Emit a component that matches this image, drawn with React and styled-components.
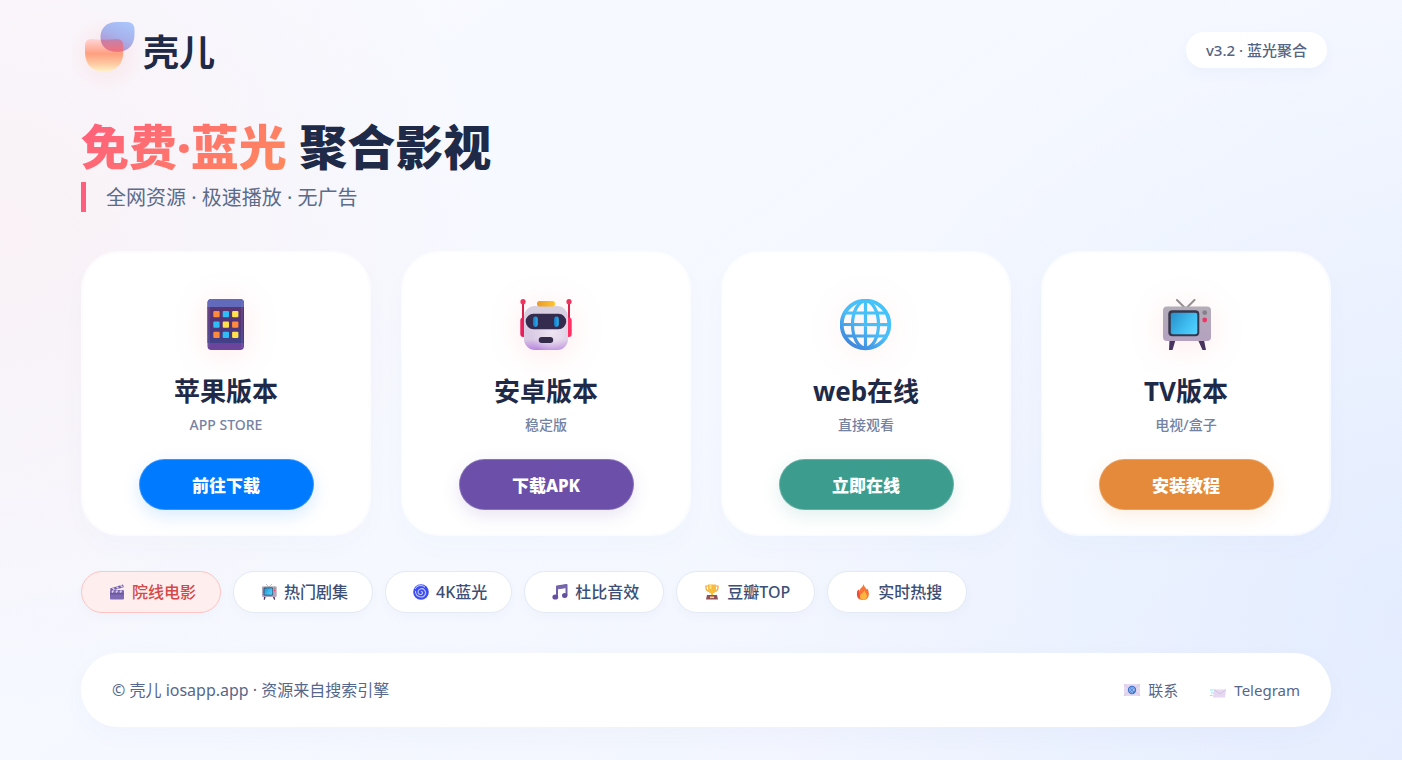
import React from 'react';
import styled, {createGlobalStyle} from 'styled-components';

const GlobalStyle = createGlobalStyle`
  * {
    box-sizing: border-box;
  }

  html {
    min-height: 100%;
  }

  body {
    margin: 0;
    min-height: 100vh;
    font-family: "Noto Sans", "Noto Sans CJK SC", sans-serif;
    color: #1e2a47;
    background:
      radial-gradient(circle at 0% 30%, rgba(255, 215, 215, 0.24), transparent 32%),
      radial-gradient(circle at 100% 80%, rgba(212, 228, 255, 0.44), transparent 42%),
      linear-gradient(145deg, #f8faff 0%, #f5f8ff 50%, #eff3fe 100%);
  }
`;

const Page = styled.div`
  padding: 20px 71px 33px 81px;
`;

const Header = styled.header`
  display: flex;
  align-items: center;
  justify-content: space-between;
  height: 60px;
  padding: 0 4px;
`;

const Brand = styled.div`
  display: flex;
  align-items: center;
  gap: 8px;
`;

const BrandName = styled.span`
  padding-top: 6px;
  font-size: 36px;
  line-height: 52px;
  font-weight: 700;
`;

const Version = styled.span`
  padding: 8px 20px;
  border-radius: 40px;
  background: #fff;
  color: #546583;
  font-size: 15px;
  line-height: 20px;
  font-weight: 500;
  box-shadow: 0 6px 14px rgba(60, 90, 150, 0.04);
`;

const Title = styled.h1`
  margin: 33px 0 1px;
  font-size: 48px;
  line-height: 68px;
  font-weight: 900;
`;

const Accent = styled.span`
  background: linear-gradient(135deg, #ff5e7d, #ff8a5c);
  background-clip: text;
  -webkit-background-clip: text;
  color: transparent;
`;

const Lead = styled.p`
  margin: 0;
  padding: 2px 0 0 20px;
  border-left: 5px solid #ff5e7d;
  color: #5b6b8a;
  font-size: 20px;
  line-height: 28px;
`;

const Grid = styled.main`
  display: grid;
  grid-template-columns: repeat(4, 1fr);
  gap: 30px;
  margin-top: 39px;
`;

const Card = styled.section`
  display: flex;
  flex-direction: column;
  align-items: center;
  padding: 46px 20px 24px;
  border: 2px solid rgba(255, 255, 255, 0.7);
  border-radius: 38px;
  background: #fff;
  background-clip: padding-box;
  box-shadow: 0 12px 28px rgba(60, 90, 150, 0.02);

  > svg {
    filter: drop-shadow(0 4px 16px rgba(255, 94, 98, 0.14));
  }
`;

const CardTitle = styled.h2`
  margin: 20px 0 0;
  font-size: 26px;
  line-height: 40px;
  font-weight: 700;
`;

const CardNote = styled.p`
  margin: 4px 0 24px;
  color: #7482a3;
  font-size: 14px;
  line-height: 20px;
  font-weight: 500;
`;

const CardLink = styled.a`
  width: 175px;
  padding: 13px 0 11px;
  border: 1px solid rgba(255, 255, 255, 0.2);
  border-radius: 40px;
  background-color: ${props => props.$color};
  box-shadow: 0 6px 18px ${props => props.$color}26;
  color: #fff;
  font-size: 17px;
  line-height: 25px;
  font-weight: 800;
  text-align: center;
  text-decoration: none;
`;

const Chips = styled.nav`
  display: flex;
  flex-wrap: wrap;
  gap: 12px;
  margin-top: 35px;
`;

const Chip = styled.button`
  display: flex;
  align-items: center;
  gap: 7px;
  height: 42px;
  padding: 0 24px 0 27px;
  border: 1px solid ${props => props.$active ? '#ffc4c4' : '#e4eaf3'};
  border-radius: 40px;
  background: ${props => props.$active ? '#ffeeee' : '#fff'};
  color: ${props => props.$active ? '#d34848' : '#3d4f74'};
  font-family: inherit;
  font-size: 16px;
  line-height: 24px;
  font-weight: 500;
  box-shadow: 0 4px 10px rgba(60, 90, 150, 0.03);
`;

const Footer = styled.footer`
  display: flex;
  align-items: center;
  justify-content: space-between;
  margin-top: 40px;
  padding: 25px 31px;
  border-radius: 40px;
  background: #fff;
  color: #55678a;
  font-size: 16px;
  line-height: 24px;
  box-shadow: 0 8px 24px rgba(60, 90, 150, 0.03);
`;

const FooterLinks = styled.div`
  display: flex;
  gap: 32px;
`;

const FooterLink = styled.a`
  display: flex;
  align-items: center;
  gap: 8px;
  color: inherit;
  font-size: 15px;
  text-decoration: none;
`;

const Logo = () => (
  <svg width="50" height="64" viewBox="0 0 50 64" overflow="visible" aria-hidden="true">
    <defs>
      <linearGradient id="cup" x1="0" y1="0" x2="0" y2="1">
        <stop offset="0" stopColor="#ffd5d8" />
        <stop offset="0.45" stopColor="#ff9f80" />
        <stop offset="0.75" stopColor="#ffc8a0" />
        <stop offset="1" stopColor="#fff3c8" />
      </linearGradient>
      <linearGradient id="leaf" x1="0.8" y1="0" x2="0.3" y2="1">
        <stop offset="0" stopColor="#aac6fb" />
        <stop offset="0.5" stopColor="#a7b1eb" />
        <stop offset="1" stopColor="#b78bc4" />
      </linearGradient>
      <linearGradient id="overlap" x1="0.5" y1="0" x2="0.5" y2="1">
        <stop offset="0" stopColor="#c183af" />
        <stop offset="0.35" stopColor="#ed7280" />
        <stop offset="1" stopColor="#ee7a73" />
      </linearGradient>
      <radialGradient id="logoGlow">
        <stop offset="0" stopColor="#ff8a8a" stopOpacity="0.16" />
        <stop offset="1" stopColor="#ff8a8a" stopOpacity="0" />
      </radialGradient>
      <clipPath id="leafShape">
        <path d="M32 4h10q7.500 0 7.500 8v4c0 11-6 17.700-17 17.700s-17-6-17-15C15.500 10 22 4 32 4z" />
      </clipPath>
    </defs>
    <circle cx="22" cy="36" r="38" fill="url(#logoGlow)" />
    <path d="M7 21q12 1.500 24 0q7.300-.5 7.300 7v6c0 13-8 19.700-19.300 19.700S0 47 0 34v-6q0-7.500 7-7z" fill="url(#cup)" />
    <path d="M32 4h10q7.500 0 7.500 8v4c0 11-6 17.700-17 17.700s-17-6-17-15C15.500 10 22 4 32 4z" fill="url(#leaf)" />
    <path d="M7 21q12 1.500 24 0q7.300-.5 7.300 7v6c0 13-8 19.700-19.300 19.700S0 47 0 34v-6q0-7.500 7-7z" fill="url(#overlap)" clipPath="url(#leafShape)" />
  </svg>
);

const PHONE_KEYS = [
  ['#ff8a3d', '#30bdf5', '#ffe14d'],
  ['#30bdf5', '#ffe14d', '#ff8a3d'],
  ['#ff8a3d', '#30bdf5', '#ffe14d'],
];

const PhoneIcon = () => (
  <svg width="52" height="52" viewBox="0 0 52 52" aria-hidden="true">
    <defs>
      <linearGradient id="phoneBody" x1="0" y1="0" x2="0" y2="1">
        <stop offset="0" stopColor="#5b3470" />
        <stop offset="0.5" stopColor="#503377" />
        <stop offset="1" stopColor="#41428b" />
      </linearGradient>
    </defs>
    <rect x="7.5" y="0" width="36.5" height="51" rx="4" fill="#6c449c" />
    <path d="M11.5 0h28.5a4 4 0 0 1 4 4v5H7.500V4a4 4 0 0 1 4-4z" fill="#626bbb" />
    <path d="M7.500 8h36.500v36H7.500z" fill="url(#phoneBody)" />
    <path d="M42 2v47M9 3v45" stroke="#8371b5" strokeWidth="1.5" opacity="0.35" />
    {PHONE_KEYS.map((row, y) => row.map((color, x) => (
      <rect key={`${x}-${y}`} x={13.3 + x * 9.4} y={12 + y * 10.4} width="6.3" height="6.3" rx="1" fill={color} />
    )))}
  </svg>
);

const RobotIcon = () => (
  <svg width="52" height="52" viewBox="0 0 52 52" aria-hidden="true">
    <defs>
      <linearGradient id="robotHead" x1="0" y1="0" x2="0" y2="1">
        <stop offset="0" stopColor="#d8cfe0" />
        <stop offset="0.75" stopColor="#d9cae4" />
        <stop offset="1" stopColor="#b985df" />
      </linearGradient>
      <radialGradient id="robotShine" cx="0.65" cy="0.6" r="0.5">
        <stop offset="0" stopColor="#eee4f2" />
        <stop offset="1" stopColor="#eee4f2" stopOpacity="0" />
      </radialGradient>
      <linearGradient id="robotHat" x1="0" y1="0" x2="1" y2="0">
        <stop offset="0" stopColor="#e99a2c" />
        <stop offset="1" stopColor="#ffc52e" />
      </linearGradient>
      <linearGradient id="robotEye" x1="0" y1="0" x2="1" y2="0">
        <stop offset="0" stopColor="#1878c4" />
        <stop offset="1" stopColor="#2bb0ef" />
      </linearGradient>
    </defs>
    <path d="M3 3v18M49 3v18" stroke="#d8224d" strokeWidth="2" />
    <circle cx="3" cy="2.700" r="2.600" fill="#f0345f" />
    <circle cx="49" cy="2.700" r="2.600" fill="#f0345f" />
    <rect x="0.300" y="18.500" width="7" height="19.500" rx="3" fill="#e91f5b" />
    <rect x="44.700" y="18.500" width="7" height="19.500" rx="3" fill="#ff2e63" />
    <rect x="4" y="7" width="44" height="44" rx="11" fill="url(#robotHead)" />
    <rect x="4" y="7" width="44" height="44" rx="11" fill="url(#robotShine)" />
    <rect x="17" y="2" width="18" height="5.500" rx="2.500" fill="url(#robotHat)" />
    <rect x="5.700" y="14.700" width="40.500" height="15.600" rx="7.800" fill="#342b4f" />
    <rect x="13" y="17.500" width="4.800" height="10.500" rx="2.400" fill="url(#robotEye)" />
    <rect x="34" y="17.500" width="4.800" height="10.500" rx="2.400" fill="url(#robotEye)" />
    <rect x="18.700" y="38" width="14.500" height="6" rx="3" fill="#342b4a" />
  </svg>
);

const GlobeIcon = () => (
  <svg width="52" height="52" viewBox="0 0 52 52" aria-hidden="true">
    <defs>
      <linearGradient id="globe" gradientUnits="userSpaceOnUse" x1="40" y1="4" x2="10" y2="48">
        <stop offset="0" stopColor="#42c5fb" />
        <stop offset="0.5" stopColor="#4bbdf7" />
        <stop offset="1" stopColor="#3f83dc" />
      </linearGradient>
    </defs>
    <g fill="none" stroke="url(#globe)" strokeWidth="3.200">
      <circle cx="25.500" cy="25.500" r="23.800" strokeWidth="3.800" />
      <ellipse cx="25.500" cy="25.500" rx="13" ry="23.500" />
      <path d="M25.450 2L25.500 49M2 25.500l47 .1M5 14h41M5 37h41" />
    </g>
  </svg>
);

const TvIcon = ({size = 52}) => (
  <svg width={size} height={size} viewBox="0 0 52 52" aria-hidden="true">
    <defs>
      <linearGradient id="tvScreen" x1="0" y1="0.2" x2="1" y2="0.8">
        <stop offset="0" stopColor="#2a94cf" />
        <stop offset="0.6" stopColor="#3fbdf0" />
        <stop offset="1" stopColor="#52d1ff" />
      </linearGradient>
      <linearGradient id="tvBody" x1="0" y1="0" x2="0" y2="1">
        <stop offset="0" stopColor="#b3adb7" />
        <stop offset="1" stopColor="#b4a1c0" />
      </linearGradient>
    </defs>
    <path d="M17 1l8 8M34.500 1l-8 8" stroke="#948f91" strokeWidth="2" strokeLinecap="round" />
    <path d="M9.500 41h6l-3 10h-3.500zM38 41h6l2 10h-3.500z" fill="#49345f" />
    <rect x="3" y="7.500" width="48" height="34.500" rx="4" fill="url(#tvBody)" />
    <rect x="8.300" y="11.300" width="31" height="26" rx="4" fill="#37364a" />
    <rect x="10.800" y="13.700" width="26.500" height="21.500" rx="2" fill="url(#tvScreen)" />
    <circle cx="44.700" cy="13.700" r="2.400" fill="#86808a" />
    <circle cx="44.700" cy="21" r="2.400" fill="#ee3566" />
  </svg>
);

const FilmIcon = () => (
  <svg width="16" height="16" viewBox="0 0 16 16" aria-hidden="true">
    <rect x="1" y="6" width="14" height="9.500" rx="1" fill="#7f6bb4" />
    <path d="M1 9h14v1.500H1z" fill="#6b579c" />
    <path d="M1 4.500L14 .5l.8 2.800L2 7z" fill="#7561a6" />
    <path d="M3.500 3.700l2 2M7.500 2.500l2 2M11.500 1.300l2 2M3 8.500L4.500 6.500M7 8.500l1.500-2M11 8.500l1.500-2" stroke="#d9cdec" strokeWidth="1.600" />
  </svg>
);

const CycloneIcon = () => (
  <svg width="16" height="16" viewBox="0 0 16 16" aria-hidden="true">
    <circle cx="8" cy="8" r="7.800" fill="#3b4cf0" />
    <path d="M8 8c1-1 2 .2 1.500 1.300C8.500 11.500 5 10.500 5 8c0-3 4-4.500 6.300-2.200 2.800 2.800.7 7.200-3.300 7.200-3.500 0-6-3-5.500-6.200" fill="none" stroke="#bfc7ff" strokeWidth="1.100" />
    <path d="M2 5C4 1 9 .6 12 3.200" fill="none" stroke="#d7dcff" strokeWidth="1" />
  </svg>
);

const MusicIcon = () => (
  <svg width="16" height="16" viewBox="0 0 16 16" aria-hidden="true">
    <path d="M5 12.500V2.500L14.500 1v10.500" fill="none" stroke="#6f60a8" strokeWidth="2" strokeLinejoin="round" />
    <path d="M5 2.500L14.500 1v2.500L5 5z" fill="#7465ac" stroke="#7465ac" />
    <ellipse cx="3.300" cy="13" rx="2.900" ry="2.600" fill="#6550a0" />
    <ellipse cx="12.700" cy="11.500" rx="2.700" ry="2.500" fill="#6550a0" />
  </svg>
);

const TrophyIcon = () => (
  <svg width="16" height="16" viewBox="0 0 16 16" aria-hidden="true">
    <path d="M4 2H2v2q0 3 4 3.500M12 2h2v2q0 3-4 3.500" fill="none" stroke="#eda534" strokeWidth="1.200" />
    <path d="M4 .5h8v4q0 4.500-3 4.800V12H7V9.300Q4 9 4 4.500z" fill="#f9bc3f" />
    <path d="M5.500 1h2v4h-2z" fill="#ffe17a" />
    <path d="M3 11h10l1 4.500H2z" fill="#91515c" />
    <rect x="6" y="12.500" width="4" height="1.600" fill="#ffd466" />
  </svg>
);

const FireIcon = () => (
  <svg width="16" height="16" viewBox="0 0 16 16" aria-hidden="true">
    <path d="M8.500 0c1 3.500 2.300 3.300 3 5.500l.8-1c2.500 3.500 2.700 11.500-4.300 11.500C1.500 16 .5 9.500 3.500 5.500l1 1.500C4.500 4 8 3.500 8.500 0z" fill="#fb7437" />
    <path d="M9.500 6c.2 3 2.500 3.500 2.500 6 0 5-7 5-7 .5C5 9.500 8.500 9.500 9.500 6z" fill="#ffb63e" />
    <path d="M2 10c0-2 .5-3.500 1.500-4.500L5 12q-1 2 0 3.500C3 14.500 2 12.500 2 10z" fill="#ef4d3d" />
  </svg>
);

const MailIcon = () => (
  <svg width="16" height="16" viewBox="0 0 16 16" aria-hidden="true">
    <path d="M0 2h16v12H0z" fill="#e5d9ef" />
    <path d="M0 14l5-5M16 14l-5-5M0 2l5 5M16 2l-5 5" stroke="#d6c5e5" />
    <circle cx="8" cy="8" r="4.200" fill="#3d73ca" />
    <circle cx="8" cy="8" r="1.500" fill="none" stroke="#b7d3ff" strokeWidth="0.800" />
    <path d="M9.500 7v1.800q1.200.4 1.200-.8A2.700 2.700 0 1 0 9 10.500" fill="none" stroke="#b7d3ff" strokeWidth="0.600" />
  </svg>
);

const SendIcon = () => (
  <svg width="16" height="16" viewBox="0 0 16 16" aria-hidden="true">
    <path d="M4 7.500h12l-1 8H3z" fill="#e6d8f0" />
    <path d="M4 7.500l6 4.500 6-4.500" fill="none" stroke="#cdb8dd" strokeWidth="0.700" />
    <path d="M0 8h3.500M1 11h2.500M0 13.500h2.500" stroke="#86e5fb" strokeWidth="1.200" />
  </svg>
);

const cards = [
  {title: '苹果版本', note: 'APP STORE', action: '前往下载', color: '#007aff', Icon: PhoneIcon},
  {title: '安卓版本', note: '稳定版', action: '下载APK', color: '#6b4fa9', Icon: RobotIcon},
  {title: 'web在线', note: '直接观看', action: '立即在线', color: '#3c9d8f', Icon: GlobeIcon},
  {title: 'TV版本', note: '电视/盒子', action: '安装教程', color: '#e48a3a', Icon: TvIcon},
];

const chips = [
  {label: '院线电影', Icon: FilmIcon},
  {label: '热门剧集', Icon: TvIcon},
  {label: '4K蓝光', Icon: CycloneIcon},
  {label: '杜比音效', Icon: MusicIcon},
  {label: '豆瓣TOP', Icon: TrophyIcon},
  {label: '实时热搜', Icon: FireIcon},
];

const App = () => (
  <>
    <GlobalStyle />
    <Page lang="zh-CN">
      <Header>
        <Brand>
          <Logo />
          <BrandName>壳儿</BrandName>
        </Brand>
        <Version>v3.2 · 蓝光聚合</Version>
      </Header>
      <Title><Accent>免费·蓝光</Accent> 聚合影视</Title>
      <Lead>全网资源 · 极速播放 · 无广告</Lead>
      <Grid>
        {cards.map(({title, note, action, color, Icon}) => (
          <Card key={title}>
            <Icon />
            <CardTitle>{title}</CardTitle>
            <CardNote>{note}</CardNote>
            <CardLink href="#" $color={color}>{action}</CardLink>
          </Card>
        ))}
      </Grid>
      <Chips>
        {chips.map(({label, Icon}, i) => (
          <Chip key={label} type="button" $active={i === 0}>
            <Icon size={16} />{label}
          </Chip>
        ))}
      </Chips>
      <Footer>
        <span>© 壳儿 iosapp.app · 资源来自搜索引擎</span>
        <FooterLinks>
          <FooterLink href="#"><MailIcon />联系</FooterLink>
          <FooterLink href="#"><SendIcon />Telegram</FooterLink>
        </FooterLinks>
      </Footer>
    </Page>
  </>
);

export default App;
